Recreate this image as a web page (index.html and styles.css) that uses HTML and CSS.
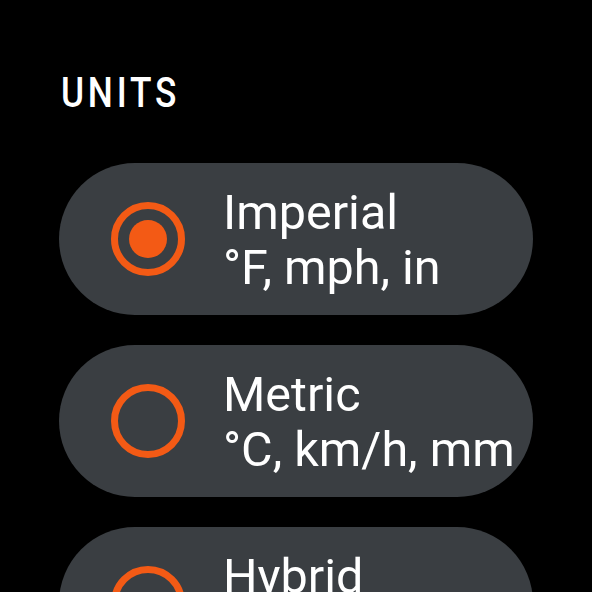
FILE: index.html
```html
<!DOCTYPE html>
<html>
<head>
<meta charset="utf-8">
<link rel="stylesheet" href="styles.css">
</head>
<body>
<div class="screen">
  <div class="title"><span class="title-text">UNITS</span></div>
  <div class="list">
    <div class="option">
      <svg class="radio" viewBox="0 0 74 74" width="74" height="74">
        <circle cx="37" cy="37" r="33.5" fill="none" stroke="#f35a15" stroke-width="7"/>
        <circle cx="37" cy="37" r="19" fill="#f35a15"/>
      </svg>
      <div class="label">
        <div class="name">Imperial</div>
        <div class="desc">°F, mph, in</div>
      </div>
    </div>
    <div class="option">
      <svg class="radio" viewBox="0 0 74 74" width="74" height="74">
        <circle cx="37" cy="37" r="33.5" fill="none" stroke="#f35a15" stroke-width="7"/>
      </svg>
      <div class="label">
        <div class="name">Metric</div>
        <div class="desc">°C, km/h, mm</div>
      </div>
    </div>
    <div class="option">
      <svg class="radio" viewBox="0 0 74 74" width="74" height="74">
        <circle cx="37" cy="37" r="33.5" fill="none" stroke="#f35a15" stroke-width="7"/>
      </svg>
      <div class="label">
        <div class="name">Hybrid</div>
        <div class="desc">°F, km/h, mm</div>
      </div>
    </div>
  </div>
</div>
</body>
</html>
```
FILE: styles.css
```css
html, body {
  margin: 0;
  padding: 0;
  background: #000;
}
.screen {
  width: 592px;
  height: 592px;
  overflow: hidden;
  font-family: Roboto, "Liberation Sans", sans-serif;
  color: #fff;
}
.title {
  padding: 69px 0 0 61px;
  font-size: 42px;
  line-height: 48px;
  font-weight: 500;
}
.title-text {
  display: inline-block;
  letter-spacing: 4.5px;
  transform: scaleX(0.84);
  transform-origin: left center;
}
.list {
  margin: 46px 0 0 59px;
  width: 474px;
  display: flex;
  flex-direction: column;
  gap: 30px;
}
.option {
  flex: none;
  height: 152px;
  border-radius: 76px;
  background: #3a3e42;
  display: flex;
  align-items: center;
  padding-left: 52px;
  box-sizing: border-box;
}
.radio {
  flex: none;
  display: block;
}
.label {
  margin-left: 38px;
  font-size: 48.5px;
  line-height: 55px;
  padding-top: 2px;
  white-space: nowrap;
}
```
